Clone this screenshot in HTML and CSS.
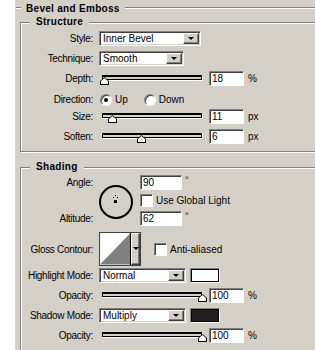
FILE: index.html
```html
<!DOCTYPE html>
<html lang="en">
<head>
    <meta charset="UTF-8">
    <title>Bevel and Emboss</title>
    <link rel="stylesheet" href="styles.css">
</head>
<body>
    <div class="panel">
        <div class="title">
            <span class="dash"></span>
            <span class="title-text">Bevel and Emboss</span>
            <span class="rule"></span>
        </div>

        <fieldset class="group structure">
            <legend>Structure</legend>
            <div class="row row-style">
                <span class="lbl">Style:</span>
                <div class="select w-style"><span class="val">Inner Bevel</span><span class="drop"></span></div>
            </div>
            <div class="row row-gap5">
                <span class="lbl">Technique:</span>
                <div class="select w-tech"><span class="val">Smooth</span><span class="drop"></span></div>
            </div>
            <div class="row row-gap5">
                <span class="lbl">Depth:</span>
                <div class="slider"><span class="thumb" style="left: -3px"></span></div>
                <input class="num" type="text" value="18" readonly>
                <span class="unit">%</span>
            </div>
            <div class="row row-dir">
                <span class="lbl">Direction:</span>
                <span class="radio checked"></span><span class="opt">Up</span>
                <span class="radio second"></span><span class="opt">Down</span>
            </div>
            <div class="row row-size">
                <span class="lbl">Size:</span>
                <div class="slider"><span class="thumb" style="left: 5px"></span></div>
                <input class="num" type="text" value="11" readonly>
                <span class="unit">px</span>
            </div>
            <div class="row row-gap5">
                <span class="lbl">Soften:</span>
                <div class="slider"><span class="thumb" style="left: 34px"></span></div>
                <input class="num" type="text" value="6" readonly>
                <span class="unit">px</span>
            </div>
        </fieldset>

        <fieldset class="group shading">
            <legend>Shading</legend>
            <div class="angle-grid">
                <span class="lbl lbl-angle">Angle:</span>
                <svg class="dial" width="36" height="36" viewBox="0 0 36 36">
                    <circle cx="17" cy="17" r="16" fill="none" stroke="#000" stroke-width="2"/>
                    <rect x="16" y="10" width="1" height="1" fill="#000"/>
                    <rect x="14" y="12" width="1" height="1" fill="#000"/>
                    <rect x="18" y="12" width="1" height="1" fill="#000"/>
                    <rect x="15" y="15" width="3" height="3" fill="#000"/>
                </svg>
                <div class="cell-angle">
                    <input class="num wide" type="text" value="90" readonly>
                    <span class="deg">°</span>
                </div>
                <div class="cell-global">
                    <span class="check"></span><span class="opt">Use Global Light</span>
                </div>
                <span class="lbl lbl-alt">Altitude:</span>
                <div class="cell-alt">
                    <input class="num wide" type="text" value="62" readonly>
                    <span class="deg">°</span>
                </div>
            </div>
            <div class="row row-gloss">
                <span class="lbl">Gloss Contour:</span>
                <div class="contour">
                    <svg class="curve" width="31" height="32" viewBox="0 0 31 32">
                        <polygon points="0,32 31,0 31,32" fill="#808080"/>
                    </svg>
                    <span class="contour-drop"></span>
                </div>
                <span class="check anti"></span><span class="opt">Anti-aliased</span>
            </div>
            <div class="row row-hl">
                <span class="lbl">Highlight Mode:</span>
                <div class="select w-mode"><span class="val">Normal</span><span class="drop"></span></div>
                <span class="swatch light"></span>
            </div>
            <div class="row row-gap5">
                <span class="lbl">Opacity:</span>
                <div class="slider"><span class="thumb" style="left: 95px"></span></div>
                <input class="num" type="text" value="100" readonly>
                <span class="unit">%</span>
            </div>
            <div class="row row-gap5">
                <span class="lbl">Shadow Mode:</span>
                <div class="select w-mode"><span class="val">Multiply</span><span class="drop"></span></div>
                <span class="swatch dark"></span>
            </div>
            <div class="row row-gap5">
                <span class="lbl">Opacity:</span>
                <div class="slider"><span class="thumb" style="left: 95px"></span></div>
                <input class="num" type="text" value="100" readonly>
                <span class="unit">%</span>
            </div>
        </fieldset>
    </div>
</body>
</html>
```

FILE: styles.css
```css
body {
    margin: 0;
    background: #fff;
    font-family: "Liberation Sans", Arial, sans-serif;
    font-size: 10px;
    color: #000;
}

.panel {
    margin-left: 15px;
    height: 350px;
    background: #d4d0c8;
    overflow: hidden;
}

/* title bar */
.title {
    display: flex;
    align-items: center;
    height: 14px;
    margin-top: 1px;
}

.dash,
.rule {
    height: 0;
    border-top: 1px solid #808080;
    border-bottom: 1px solid #fff;
}

.dash {
    width: 5px;
    margin-left: 1px;
}

.title-text {
    font-weight: bold;
    letter-spacing: 0.3px;
    padding: 0 5px;
}

.rule {
    flex: 1;
}

/* group boxes */
.group {
    margin: 1px -30px 0 5px;
    padding: 0 0 7px 0;
    border: 1px solid #808080;
    box-shadow: inset 1px 1px 0 #fff, 1px 1px 0 #fff;
    min-width: 0;
}

.group legend {
    margin-left: 9px;
    padding: 0 6px;
    font-weight: bold;
    letter-spacing: 0.3px;
    line-height: 12px;
    background: #d4d0c8;
}

.shading {
    margin-top: 9px;
    padding-bottom: 40px;
}

/* rows */
.row {
    display: flex;
    align-items: center;
    height: 15px;
}

.row-style {
    margin-top: 3px;
}

.row-gap5 {
    margin-top: 5px;
}

.row-dir {
    margin-top: 6px;
}

.row-size {
    margin-top: 2px;
}

.lbl {
    width: 72px;
    flex: none;
    text-align: right;
    margin-right: 6px;
    white-space: nowrap;
    letter-spacing: -0.3px;
}

/* sunken select */
.select {
    display: flex;
    box-sizing: border-box;
    height: 15px;
    background: #fff;
    border: 1px solid;
    border-color: #808080 #fff #fff #808080;
    box-shadow: inset 1px 1px 0 #404040, inset -1px -1px 0 #d4d0c8;
    padding: 1px;
}

.select .val {
    flex: 1;
    padding-left: 2px;
    line-height: 11px;
}

.drop,
.contour-drop {
    position: relative;
    width: 16px;
    box-sizing: border-box;
    background: #d4d0c8;
    border: 1px solid;
    border-color: #fff #404040 #404040 #fff;
    box-shadow: inset -1px -1px 0 #808080;
}

.drop::after,
.contour-drop::after {
    content: "";
    position: absolute;
    left: 4px;
    top: 3px;
    border-left: 3px solid transparent;
    border-right: 3px solid transparent;
    border-top: 3px solid #000;
}

.w-style {
    width: 102px;
}

.w-tech {
    width: 85px;
}

.w-mode {
    width: 87px;
}

/* slider track */
.slider {
    position: relative;
    box-sizing: border-box;
    width: 100px;
    height: 5px;
    margin-left: 3px;
    margin-top: -2px;
    background: #d4d0c8;
    border: 1px solid #000;
    border-top-width: 2px;
    box-shadow: 1px 1px 0 #fff;
}

.thumb {
    position: absolute;
    top: 0;
    width: 9px;
    height: 8px;
    background: #000;
    clip-path: polygon(50% 0, 100% 50%, 100% 100%, 0 100%, 0 50%);
}

.thumb::after {
    content: "";
    position: absolute;
    left: 1px;
    top: 1px;
    width: 7px;
    height: 6px;
    background: #fff;
    clip-path: polygon(50% 0, 100% 50%, 100% 100%, 0 100%, 0 50%);
}

/* number fields */
.num {
    box-sizing: border-box;
    width: 35px;
    height: 15px;
    margin: 0 0 0 7px;
    padding: 0 0 0 2px;
    font-family: inherit;
    font-size: 10px;
    color: #000;
    background: #fff;
    border: 1px solid;
    border-color: #808080 #fff #fff #808080;
    box-shadow: inset 1px 1px 0 #404040;
    outline: none;
}

.num.wide {
    width: 42px;
    margin-left: 0;
}

.unit {
    margin-left: 4px;
}

.deg {
    margin-left: 3px;
    align-self: flex-start;
    font-size: 9px;
    line-height: 10px;
}

/* radios and checks */
.radio {
    position: relative;
    box-sizing: border-box;
    width: 12px;
    height: 12px;
    margin-left: 1px;
    border-radius: 50%;
    background: #fff;
    border: 1px solid;
    border-color: #808080 #fff #fff #808080;
    box-shadow: inset 1px 1px 0 #404040;
}

.radio.checked::after {
    content: "";
    position: absolute;
    left: 3px;
    top: 3px;
    width: 4px;
    height: 4px;
    border-radius: 50%;
    background: #000;
}

.radio.second {
    margin-left: 16px;
}

.opt {
    margin-left: 3px;
}

.check {
    box-sizing: border-box;
    width: 13px;
    height: 13px;
    background: #fff;
    border: 1px solid;
    border-color: #808080 #fff #fff #808080;
    box-shadow: inset 1px 1px 0 #404040;
}

/* angle block */
.angle-grid {
    display: grid;
    grid-template-columns: 72px 35px auto;
    grid-template-rows: 15px 13px 15px;
    column-gap: 6px;
    row-gap: 4px;
    margin-top: 2px;
    align-items: center;
}

.angle-grid .lbl {
    width: auto;
    margin-right: 0;
}

.lbl-angle {
    grid-column: 1;
    grid-row: 1;
}

.lbl-alt {
    grid-column: 1;
    grid-row: 3;
}

.dial {
    grid-column: 2;
    grid-row: 1 / 4;
    margin-top: 4px;
}

.cell-angle,
.cell-global,
.cell-alt {
    grid-column: 3;
    display: flex;
    align-items: center;
    height: 15px;
}

.cell-angle {
    grid-row: 1;
}

.cell-global {
    grid-row: 2;
}

.cell-alt {
    grid-row: 3;
}

/* gloss contour */
.row-gloss {
    height: 34px;
    margin-top: 6px;
}

.contour {
    display: flex;
    box-sizing: border-box;
    width: 42px;
    height: 34px;
    border: 1px solid #404040;
    background: #fff;
}

.curve {
    display: block;
    border-right: 1px solid #000;
}

.contour-drop {
    width: 9px;
}

.contour-drop::after {
    left: 1px;
    top: 13px;
}

.check.anti {
    margin-left: 13px;
}

.row-hl {
    margin-top: 2px;
}

.swatch {
    box-sizing: border-box;
    width: 30px;
    height: 15px;
    margin-left: 4px;
    border: 1px solid;
    border-color: #808080 #fff #fff #808080;
    box-shadow: inset 1px 1px 0 #000, inset -1px -1px 0 #000;
}

.swatch.light {
    background: #fff;
}

.swatch.dark {
    background: #231f20;
}
```
